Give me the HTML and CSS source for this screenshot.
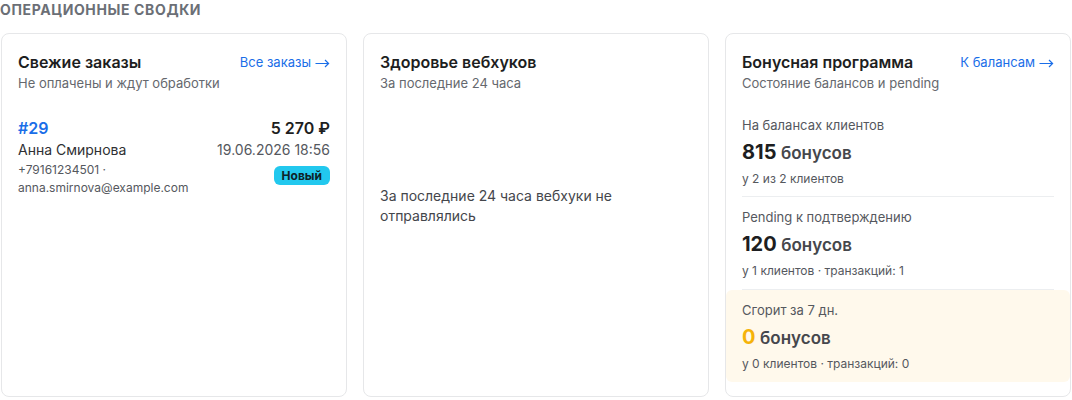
FILE: index.html
```html
<!DOCTYPE html>
<html lang="ru">
<head>
<meta charset="utf-8">
<title>Операционные сводки</title>
<link rel="stylesheet" href="styles.css">
</head>
<body>
<section class="summaries">
  <h2 class="summaries-title">Операционные сводки</h2>
  <div class="grid">
    <article class="card">
      <header class="card-head">
        <div>
          <h3 class="card-title">Свежие заказы</h3>
          <p class="card-sub">Не оплачены и ждут обработки</p>
        </div>
        <a class="card-link" href="#">Все заказы<svg class="arrow" width="15" height="10" viewBox="0 0 15 10" aria-hidden="true"><path d="M0.5 5.5H13.5M10 2L13.6 5.5L10 9" fill="none" stroke="currentColor" stroke-width="1.2"/></svg></a>
      </header>
      <div class="order">
        <div class="order-main">
          <a class="order-id" href="#">#29</a>
          <div class="order-name">Анна Смирнова</div>
          <div class="order-contact">+79161234501 · anna.smirnova@example.com</div>
        </div>
        <div class="order-side">
          <div class="order-sum">5 270 ₽</div>
          <div class="order-date">19.06.2026 18:56</div>
          <span class="badge">Новый</span>
        </div>
      </div>
    </article>

    <article class="card">
      <header class="card-head">
        <div>
          <h3 class="card-title">Здоровье вебхуков</h3>
          <p class="card-sub">За последние 24 часа</p>
        </div>
      </header>
      <p class="empty">За последние 24 часа вебхуки не отправлялись</p>
    </article>

    <article class="card">
      <header class="card-head">
        <div>
          <h3 class="card-title">Бонусная программа</h3>
          <p class="card-sub">Состояние балансов и pending</p>
        </div>
        <a class="card-link" href="#">К балансам<svg class="arrow" width="15" height="10" viewBox="0 0 15 10" aria-hidden="true"><path d="M0.5 5.5H13.5M10 2L13.6 5.5L10 9" fill="none" stroke="currentColor" stroke-width="1.2"/></svg></a>
      </header>
      <div class="stat stat-first">
        <div class="stat-label">На балансах клиентов</div>
        <div class="stat-value"><span class="num">815</span> <span class="unit">бонусов</span></div>
        <div class="stat-sub">у 2 из 2 клиентов</div>
      </div>
      <div class="stat">
        <div class="stat-label">Pending к подтверждению</div>
        <div class="stat-value"><span class="num">120</span> <span class="unit">бонусов</span></div>
        <div class="stat-sub">у 1 клиентов · транзакций: 1</div>
      </div>
      <div class="stat stat-warn">
        <div class="stat-label">Сгорит за 7 дн.</div>
        <div class="stat-value"><span class="num num-warn">0</span> <span class="unit">бонусов</span></div>
        <div class="stat-sub">у 0 клиентов · транзакций: 0</div>
      </div>
    </article>
  </div>
</section>
</body>
</html>
```

FILE: styles.css
```css
* { box-sizing: border-box; }
html, body { margin: 0; padding: 0; background: #ffffff; }
body {
  font-family: Inter, "Noto Sans", "Liberation Sans", sans-serif;
  color: #1f2023;
}
.summaries { padding: 0 1px; width: 1072px; }
.summaries-title {
  margin: 0 0 13px -1px;
  font-size: 14px;
  line-height: 20px;
  font-weight: 700;
  text-transform: uppercase;
  letter-spacing: 0.045em;
  color: #6b6f76;
}
.grid {
  display: grid;
  grid-template-columns: repeat(3, 346px);
  gap: 16px;
}
.card {
  border: 1px solid #e6e7e9;
  border-radius: 8px;
  padding: 16px 16px 14px;
  background: #fff;
  display: flex;
  flex-direction: column;
}
.card-head {
  display: flex;
  justify-content: space-between;
  align-items: flex-start;
  gap: 12px;
  margin-bottom: 12px;
}
.card-title {
  margin: 0;
  font-size: 16px;
  line-height: 24px;
  font-weight: 600;
  color: #1d1e21;
}
.card-sub {
  margin: 0;
  font-size: 13px;
  line-height: 18px;
  color: #65686e;
}
.card-link {
  display: inline-flex;
  align-items: center;
  gap: 4px;
  font-size: 13px;
  line-height: 24px;
  color: #1a6ee8;
  text-decoration: none;
  white-space: nowrap;
}
.arrow { display: block; margin-top: 1px; }
.order {
  display: flex;
  justify-content: space-between;
  gap: 12px;
  margin-top: 12px;
}
.order-main { min-width: 0; flex: 1; }
.order-id {
  display: block;
  font-size: 16px;
  line-height: 24px;
  font-weight: 600;
  color: #1a6ee8;
  text-decoration: none;
}
.order-name {
  font-size: 14px;
  line-height: 20px;
  color: #2f3033;
}
.order-contact {
  font-size: 12px;
  line-height: 18px;
  color: #55585e;
  padding-top: 1px;
}
.order-side {
  display: flex;
  flex-direction: column;
  align-items: flex-end;
  white-space: nowrap;
}
.order-sum {
  font-size: 16px;
  line-height: 24px;
  font-weight: 600;
  color: #1d1e21;
}
.order-date {
  font-size: 14px;
  line-height: 20px;
  color: #55585e;
}
.badge {
  margin-top: 6px;
  display: inline-block;
  background: #22c8ee;
  color: #0e2329;
  font-size: 12px;
  font-weight: 700;
  line-height: 19px;
  padding: 0 8px;
  border-radius: 6px;
}
.empty {
  margin: 82px 0 0;
  font-size: 14px;
  line-height: 20px;
  color: #44464b;
}
.stat {
  padding: 11px 0 10px;
  border-bottom: 1px solid #eceef0;
}
.stat-first { padding: 12px 0 9px; }
.stat-label {
  font-size: 13px;
  line-height: 18px;
  color: #55585e;
  margin-bottom: 4px;
}
.stat-value {
  line-height: 28px;
  color: #45474c;
}
.num {
  font-size: 20px;
  font-weight: 700;
  color: #1d1e21;
}
.num-warn { color: #f5b30a; }
.unit {
  font-size: 17px;
  font-weight: 600;
  color: #45474c;
}
.stat-sub {
  margin-top: 4px;
  font-size: 12px;
  line-height: 16px;
  color: #55585e;
}
.stat-warn {
  border-bottom: 0;
  background: #fff9ec;
  border-radius: 6px;
  margin: 0 -16px;
  padding: 11px 16px 10px;
}
```
